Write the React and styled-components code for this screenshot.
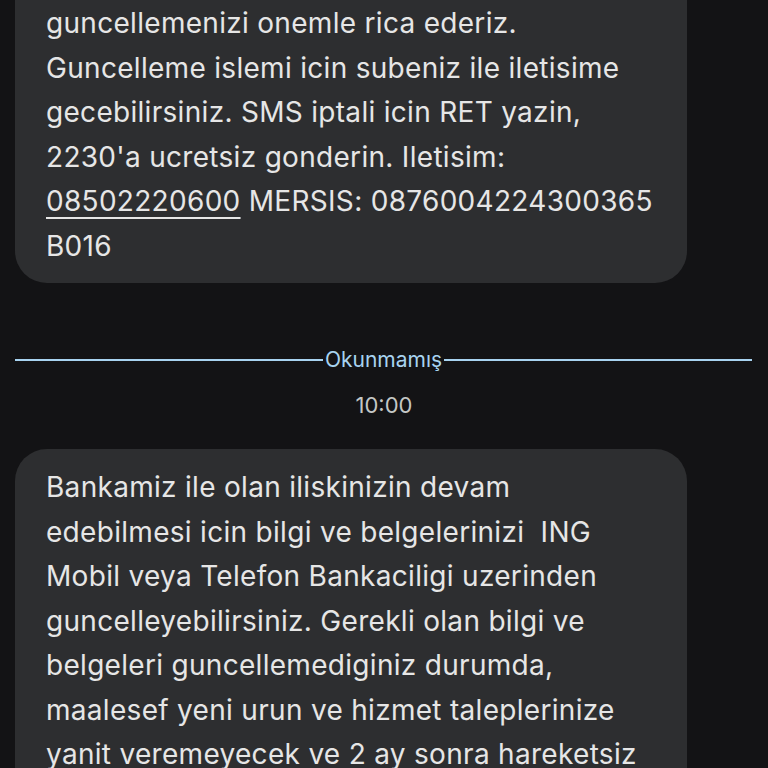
import React from 'react'
import styled, { createGlobalStyle } from 'styled-components'

const GlobalStyle = createGlobalStyle`
  html, body {
    margin: 0;
    padding: 0;
    background: #131315;
  }
  body {
    font-family: Inter, Roboto, "Noto Sans", sans-serif;
    -webkit-font-smoothing: antialiased;
  }
`

const Screen = styled.div`
  width: 768px;
  height: 768px;
  overflow: hidden;
  background: #131315;
  display: flex;
  flex-direction: column;
`

const Bubble = styled.div`
  align-self: flex-start;
  width: 672px;
  box-sizing: border-box;
  margin-left: 15px;
  background: #2d2e30;
  color: #e6e6e6;
  border-radius: ${p => (p.$cut ? '0 0 32px 32px' : '32px')};
  padding: ${p => (p.$cut ? '1px 30px 15px 31px' : '16px 30px 16px 31px')};
  font-size: 28px;
  line-height: 44.5px;
  letter-spacing: 0.3px;
`

const Line = styled.span`
  display: block;
  white-space: pre;
`

const Link = styled.span`
  text-decoration: underline;
  text-decoration-thickness: 2px;
  text-underline-offset: 6px;
`

const Divider = styled.div`
  display: flex;
  align-items: center;
  margin: 64px 16px 0 15px;
  color: #a8d3f0;
  font-size: 21px;
  gap: 2px;
  &::before,
  &::after {
    content: "";
    flex: 1;
    height: 2px;
    background: #a8d3f0;
  }
`

const Time = styled.div`
  text-align: center;
  color: #c4c7c5;
  font-size: 22px;
  margin-top: 20px;
  margin-bottom: 31px;
`

const top = [
  'guncellemenizi onemle rica ederiz.',
  'Guncelleme islemi icin subeniz ile iletisime',
  'gecebilirsiniz. SMS iptali icin RET yazin,',
  "2230'a ucretsiz gonderin. Iletisim:",
]

const bottom = [
  'Bankamiz ile olan iliskinizin devam',
  'edebilmesi icin bilgi ve belgelerinizi  ING',
  'Mobil veya Telefon Bankaciligi uzerinden',
  'guncelleyebilirsiniz. Gerekli olan bilgi ve',
  'belgeleri guncellemediginiz durumda,',
  'maalesef yeni urun ve hizmet taleplerinize',
  'yanit veremeyecek ve 2 ay sonra hareketsiz',
  'musteri statusune alinacaksiniz.',
]

export default function App() {
  return (
    <Screen>
      <GlobalStyle />
      <Bubble $cut>
        {top.map(t => (
          <Line key={t}>{t}</Line>
        ))}
        <Line>
          <Link>08502220600</Link> MERSIS: 0876004224300365
        </Line>
        <Line>B016</Line>
      </Bubble>
      <Divider>Okunmamış</Divider>
      <Time>10:00</Time>
      <Bubble>
        {bottom.map(t => (
          <Line key={t}>{t}</Line>
        ))}
      </Bubble>
    </Screen>
  )
}
